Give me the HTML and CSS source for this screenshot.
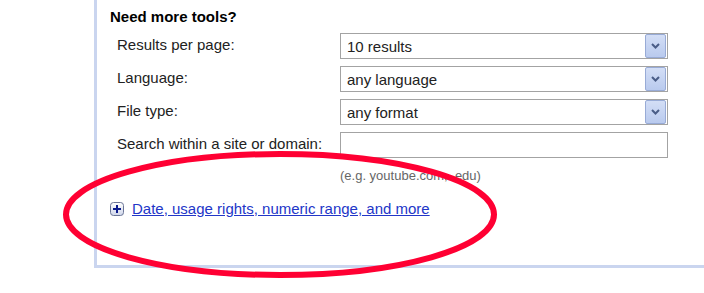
FILE: index.html
```html
<!DOCTYPE html>
<html lang="en">
<head>
    <meta charset="UTF-8">
    <meta name="viewport" content="width=device-width, initial-scale=1.0">
    <title>Advanced Search</title>
    <link rel="stylesheet" href="styles.css">
</head>
<body>
    <div class="panel">
        <h2>Need more tools?</h2>

        <div class="tools">
            <label>Results per page:</label>
            <div class="select">
                <span class="value">10 results</span>
                <span class="arrow"><svg width="9" height="6" viewBox="0 0 9 6"><path d="M1 1 L4.5 4.5 L8 1" fill="none" stroke="#4a5d87" stroke-width="2"/></svg></span>
            </div>

            <label>Language:</label>
            <div class="select">
                <span class="value">any language</span>
                <span class="arrow"><svg width="9" height="6" viewBox="0 0 9 6"><path d="M1 1 L4.5 4.5 L8 1" fill="none" stroke="#4a5d87" stroke-width="2"/></svg></span>
            </div>

            <label>File type:</label>
            <div class="select">
                <span class="value">any format</span>
                <span class="arrow"><svg width="9" height="6" viewBox="0 0 9 6"><path d="M1 1 L4.5 4.5 L8 1" fill="none" stroke="#4a5d87" stroke-width="2"/></svg></span>
            </div>

            <label>Search within a site or domain:</label>
            <input type="text" class="site">

            <span></span>
            <div class="hint">(e.g. youtube.com, .edu)</div>
        </div>

        <div class="more">
            <svg class="plus" width="14" height="14" viewBox="0 0 14 14">
                <defs>
                    <linearGradient id="pg" x1="0" y1="0" x2="0" y2="1">
                        <stop offset="0" stop-color="#ffffff"/>
                        <stop offset="1" stop-color="#cfd6ea"/>
                    </linearGradient>
                </defs>
                <rect x="0.5" y="0.5" width="13" height="13" rx="3" fill="url(#pg)" stroke="#6b7596"/>
                <path d="M7 3 V11 M3 7 H11" stroke="#0a1a8c" stroke-width="2"/>
            </svg>
            <a href="#">Date, usage rights, numeric range, and more</a>
        </div>
    </div>

    <!-- red marker drawn over the screenshot -->
    <svg class="marker" width="704" height="293" viewBox="0 0 704 293">
        <ellipse cx="280" cy="214.5" rx="214" ry="60.5" fill="none" stroke="#ff0033" stroke-width="6"/>
    </svg>
</body>
</html>
```

FILE: styles.css
```css
body {
    margin: 0;
    font-family: "Liberation Sans", Arial, sans-serif;
    font-size: 15px;
    line-height: 17px;
    color: #222;
    background: #fff;
    overflow: hidden;
    position: relative;
    height: 293px;
}
.panel {
    margin-left: 94px;
    width: 700px;
    border: 3px solid #cad5ef;
    border-top: none;
    padding: 8px 0 48px 13px;
}
h2 {
    margin: 0;
    font-size: 15px;
    line-height: 17px;
    font-weight: bold;
    color: #000;
}
.tools {
    display: grid;
    grid-template-columns: 223px 328px;
    grid-auto-rows: 26px;
    row-gap: 7px;
    margin: 8px 0 0 7px;
}
.tools label {
    align-self: center;
    padding-bottom: 3px;
}
.select {
    display: flex;
    align-items: center;
    border: 1px solid #a3a3a3;
    padding: 1px;
    box-sizing: border-box;
}
.select .value {
    flex: 1;
    padding-left: 5px;
}
.select .arrow {
    width: 19px;
    height: 22px;
    border: 1px solid #98abd6;
    border-radius: 2px;
    background: linear-gradient(#d3def6, #b9caee);
    display: flex;
    align-items: center;
    justify-content: center;
}
.site {
    margin: 0;
    border: 1px solid #a3a3a3;
    box-sizing: border-box;
    height: 26px;
    font: inherit;
    padding: 0 5px;
}
.hint {
    height: 15px;
    font-size: 13px;
    line-height: 15px;
    color: #666;
    margin-top: 3px;
}
.more {
    display: flex;
    align-items: center;
    gap: 8px;
    margin-top: 9px;
}
.plus {
    display: block;
}
.more a {
    color: #2236c8;
}
.marker {
    position: absolute;
    left: 0;
    top: 0;
    pointer-events: none;
}
```
